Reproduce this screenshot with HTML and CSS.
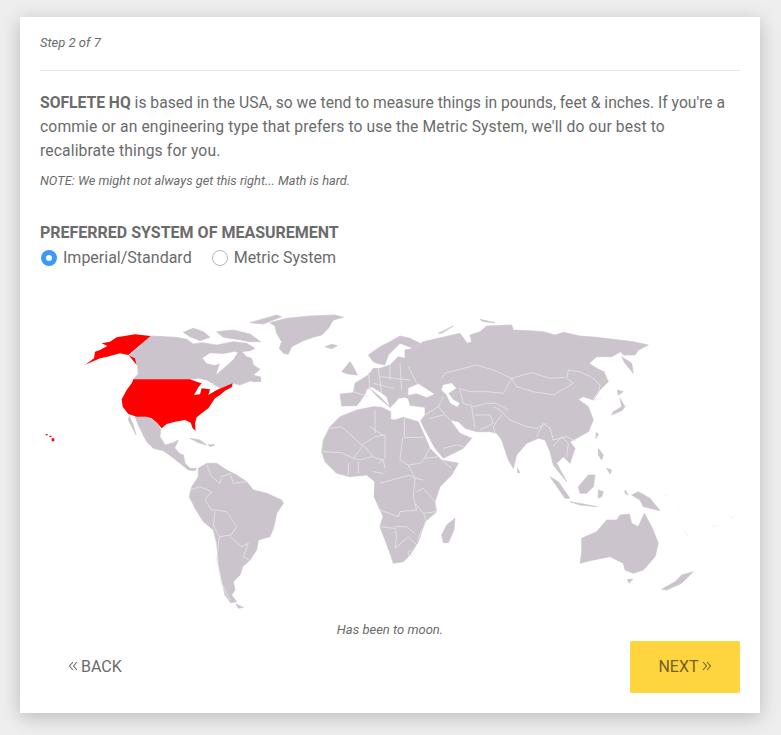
FILE: index.html
```html
<!DOCTYPE html>
<html lang="en">
<head>
<meta charset="utf-8">
<title>Step 2 of 7</title>
<link rel="stylesheet" href="styles.css">
</head>
<body>
<main class="card">
  <p class="step">Step 2 of 7</p>
  <hr class="rule">
  <p class="intro"><strong>SOFLETE HQ</strong> is based in the USA, so we tend to measure things in pounds, feet &amp; inches. If you're a <span class="loose">commie or an engineering type that prefers to use the Metric System, we'll do our best to recalibrate things for you.</span></p>
  <p class="note">NOTE: We might not always get this right... Math is hard.</p>
  <h2 class="label">PREFERRED SYSTEM OF MEASUREMENT</h2>
  <div class="radios">
    <span class="radio"><i class="dot on"></i>Imperial/Standard</span>
    <span class="radio"><i class="dot"></i>Metric System</span>
  </div>
  <svg class="map" viewBox="0 0 2220 960" aria-label="World map">
    <g class="land">
      <path d="M392,108L470,112 500,118 520,132 545,128 590,135 640,125 680,130 705,145 690,152 665,155 680,170 695,175 700,195 720,208 700,225 722,232 722,245 690,243 660,255 640,250 610,270 585,255 560,240 535,235 510,238 340,238 355,222 352,195 345,175 330,165Z"/>
      <path d="M490,97L520,85 550,95 570,112 540,122 510,110Z"/>
      <path d="M590,95L640,90 690,102 722,125 690,125 650,118 610,112Z"/>
      <path d="M690,68L770,45 785,50 730,72Z"/>
      <path d="M695,240L720,230 722,243 702,245Z"/>
      <path d="M750,68L800,55 870,48 945,45 970,52 940,60 925,85 905,105 880,112 850,122 815,140 805,163 790,160 778,145 785,125 770,100 765,78Z"/>
      <path d="M915,140L935,133 952,137 935,146Z"/>
      <path d="M965,215L990,185 1000,200 1012,225 985,222Z"/>
      <path d="M345,350L378,352 395,358 412,372 422,388 420,410 435,435 460,428 475,420 462,448 465,445 478,460 490,465 495,490 510,505 530,505 525,512 505,510 480,490 455,470 430,452 400,445 380,425 365,395 355,375Z"/>
      <path d="M328,348L340,375 348,405 338,385 325,360Z"/>
      <path d="M510,415L540,420 560,435 535,428Z"/>
      <path d="M565,433L585,435 570,440Z"/>
      <path d="M535,505L560,490 590,490 620,510 650,525 680,545 700,570 740,580 785,600 790,610 770,640 762,680 750,710 715,720 710,750 690,780 668,800 660,825 640,845 645,870 635,885 650,905 632,908 615,885 605,840 595,790 590,730 580,690 550,665 525,625 508,590 515,560 535,530Z"/>
      <path d="M648,912L670,922 655,925Z"/>
      <path d="M1112,335L1085,322 1060,320 1010,330 960,350 930,380 910,420 905,455 915,485 950,520 990,530 1040,525 1065,545 1063,590 1090,650 1080,680 1100,720 1112,720Z"/>
    </g>
    <g class="land" transform="translate(1080 0)">
      <path d="M-34,328L-18,322 0,340 30,358 45,360 70,352 115,365 150,445 185,480 235,490 215,525 180,560 165,605 170,635 135,665 115,725 90,765 70,785 40,790 30,760 0,680 10,650 -17,590 -15,545 -34,525Z"/>
      <path d="M100,145L130,125 175,115 240,100 262,130 275,125 270,105 300,95 320,78 395,75 400,90 450,92 490,95 525,105 550,97 600,108 650,112 700,118 760,125 805,135 775,150 765,165 730,165 722,155 695,170 650,170 628,190 650,205 672,215 685,245 660,270 640,300 610,290 595,298 625,320 640,360 625,395 590,415 570,425 585,445 570,490 550,470 530,490 560,545 520,495 510,455 495,420 475,415 440,430 410,465 400,505 385,480 365,420 350,400 330,395 290,395 255,385 235,365 210,360 240,400 275,415 250,445 190,475 165,445 130,380 122,362 135,345 135,322 90,316 85,296 75,292 55,295 45,308 30,322 20,290 0,275 -25,260 -40,268 -45,282 -60,305 -70,317 -115,318 -120,282 -80,278 -75,250 -35,225 -20,205 0,205 30,195 55,170 75,175 75,150Z"/>
      <path d="M-35,165L0,140 30,125 60,108 90,115 120,130 100,145 60,130 45,145 25,165 15,195 -10,190 -20,185Z"/>
      <path d="M-28,268L0,290 30,322 18,312 -8,290Z"/>
      <path d="M175,100L220,78 185,100Z"/>
      <path d="M300,58L345,68 310,65Z"/>
      <path d="M725,170L755,190 760,220 735,190Z"/>
      <path d="M712,270L730,275 715,285Z"/>
      <path d="M700,335L725,320 720,295 735,320 725,332 695,345Z"/>
      <path d="M648,398L655,402 648,415Z"/>
      <path d="M655,445L670,465 665,480 655,465Z"/>
      <path d="M680,505L695,510 690,522Z"/>
      <path d="M412,505L420,518 413,518Z"/>
      <path d="M510,530L535,545 570,595 555,595Z"/>
      <path d="M570,605L610,612 650,620 600,615Z"/>
      <path d="M595,560L625,525 645,525 640,560 620,580 600,580Z"/>
      <path d="M655,570L670,575 665,590 655,595Z"/>
      <path d="M735,570L745,585 735,580Z"/>
      <path d="M755,585L775,575 810,595 840,632 790,620 780,600Z"/>
      <path d="M225,655L222,690 205,728 190,728 185,705 200,675Z"/>
      <path d="M605,715L650,695 680,660 710,660 720,645 748,642 755,670 775,680 793,640 815,680 835,730 825,770 790,810 760,820 735,810 730,790 690,770 640,780 600,790 605,760Z"/>
      <path d="M742,838L758,838 748,850Z"/>
      <path d="M845,868L885,845 905,825 940,815 905,850 860,870Z"/>
    </g>
    <g class="sea">
      <path d="M548,175L570,160 610,162 645,155 652,158 640,178 610,205 590,222 600,190 585,195 560,190Z"/>
      <path d="M520,240L545,242 552,258 570,262 580,248 565,272 548,262 530,252Z"/>
    </g>
    <g class="sea" transform="translate(1080 0)">
      <path d="M85,265L115,252 140,268 162,282 140,292 110,280 85,285Z"/>
      <path d="M190,255L215,250 228,265 205,280 220,300 238,310 232,320 212,310 200,285 185,270Z"/>
      <path d="M15,195L30,165 50,150 72,150 55,165 30,190Z"/>
    </g>
    <g class="borders">
      <path d="M560,495L575,530 600,550 605,530 630,520 640,550 680,545M510,570L540,560 575,575 555,600 575,630 590,630 620,635 650,680 630,710 665,740 685,730 670,770 695,785M585,635L580,675 598,710 630,705M598,710L590,780 605,850 630,900"/>
      <path d="M930,385L965,380 1025,435 1065,410 1095,405M905,455L965,458 1000,475 1030,435M1000,475L1020,480 1055,470 1090,480 1095,505M985,490L985,525M1015,485L1015,520M1060,515L1090,520M1030,435L1060,470M1065,330L1065,400"/>
      <path d="M1000,275L1045,290M1045,215L1050,270M1075,205L1085,280"/>
    </g>
    <g class="borders" transform="translate(1080 0)">
      <path d="M185,235L195,220 250,205 290,195 340,210 395,235 410,260 460,275 520,285 580,250 560,235 565,210 600,215 640,235 660,255 655,275 640,295M395,235L455,218 510,235 555,232M235,265L270,275 320,275 370,280 395,235M240,270L250,310 285,320 320,310 350,310 385,330M275,320L285,385M285,345L330,345 340,370 300,390M340,320L360,330 390,360 440,380 470,385 500,370M345,400L340,380 365,345M470,410L490,370 510,385 520,420 560,410 590,425M520,440L545,410 565,430 560,470M640,300L665,295"/>
      <path d="M135,345L175,320 210,360M150,355L190,345M190,445L230,435 250,440M175,320L190,290"/>
      <path d="M73,355L73,412 130,412M68,412L60,480 85,495 120,490 130,480 150,445M135,475L175,470 215,505M85,495L105,535 130,540M0,550L35,540 90,525 105,535 100,590 110,630 60,635 55,650 0,630M110,575L130,565 165,605 170,635 130,640 105,610M130,640L140,665 120,700 112,725M0,680L45,685 50,710 45,745 85,710 110,735M45,680L80,680 105,700M15,410L15,475 -5,490M15,410L-30,380"/>
      <path d="M30,195L30,240M60,190L65,270M0,230L90,240M-20,250L40,265M85,200L110,250"/>
      <circle cx="92" cy="760" r="8"/>
    </g>
    <g class="faint" transform="translate(1080 0)">
      <path d="M850,590l8,-5M895,625l8,8M910,690l14,18M995,680l10,-4M1050,655l14,-6"/>
    </g>
    <g class="usa">
      <path d="M392,108L345,103 290,112 270,125 245,130 262,138 240,150 225,155 222,175 196,194 240,175 262,170 300,160 325,165 345,175 350,195 338,180 325,165Z"/>
      <path d="M340,238L510,238 530,245 545,250 535,262 522,285 540,283 545,265 570,268 565,285 590,270 610,262 638,250 635,262 615,272 600,285 585,295 575,310 565,325 545,340 530,352 525,370 527,392 518,385 512,368 495,360 465,365 440,372 425,385 412,370 395,355 378,350 350,350 325,342 308,320 305,298 320,270 335,250Z"/>
      <path d="M77,402h6v4h-6zM88,407h6v4h-6zM95,415h8v9h-8z"/>
    </g>
  </svg>
  <p class="caption">Has been to moon.</p>
  <div class="actions">
    <a class="btn back"><svg class="chev" viewBox="0 0 9 10"><path d="M4.500 1L1 5l3.500 4M8.500 1L5 5l3.500 4"/></svg>BACK</a>
    <a class="btn next">NEXT<svg class="chev" viewBox="0 0 9 10"><path d="M.5 1L4 5 .5 9M4.500 1L8 5 4.500 9"/></svg></a>
  </div>
</main>
</body>
</html>
```
FILE: styles.css
```css
* { box-sizing: border-box; }
html, body { margin: 0; }
body {
  background: #eeeeee;
  padding: 17px 21px 22px 20px;
  font-family: Roboto, "Liberation Sans", sans-serif;
  color: #6b6b6b;
}
.card {
  width: 740px;
  height: 696px;
  background: #ffffff;
  padding: 0 20px;
  box-shadow: 0 4px 18px rgba(0, 0, 0, 0.22);
  display: flex;
  flex-direction: column;
}
.step {
  margin: 19px 0 0;
  font-size: 13px;
  line-height: 14px;
  font-style: italic;
}
.rule {
  width: 100%;
  margin: 20px 0 0;
  border: 0;
  border-top: 1px solid #e6e6e6;
}
.intro {
  max-width: 690px;
  margin: 20px 0 0;
  font-size: 15.66px;
  line-height: 24px;
}
.loose { letter-spacing: 0.13px; }
.note {
  margin: 10px 0 0;
  font-size: 12.8px;
  line-height: 16px;
  font-style: italic;
}
.label {
  margin: 35px 0 0;
  font-size: 16px;
  line-height: 18px;
  font-weight: 700;
}
.radios {
  display: flex;
  gap: 19px;
  margin-top: 6px;
  font-size: 16px;
  line-height: 20px;
}
.radio { display: flex; align-items: center; gap: 6px; }
.dot {
  width: 16px;
  height: 16px;
  margin-left: 1px;
  border-radius: 50%;
  border: 1px solid #b5b5b5;
  background: #ffffff;
}
.dot.on { border: 5px solid #3b99fc; }
.map {
  display: block;
  width: 740px;
  height: 320px;
  margin: 32px 0 0 -20px;
  flex: none;
}
.land path { fill: #cbc4cd; stroke: #cbc4cd; stroke-width: 2; stroke-linejoin: round; }
.sea path { fill: #ffffff; stroke: #ffffff; stroke-width: 1; stroke-linejoin: round; }
.borders path, .borders circle { fill: none; stroke: #e9e6ea; stroke-width: 2.4; }
.faint path { fill: none; stroke: #f4f3f5; stroke-width: 3; }
.usa path { fill: #ff0000; }
.caption {
  margin: 2px 0 0;
  text-align: center;
  font-size: 13px;
  line-height: 16px;
  font-style: italic;
}
.actions {
  display: flex;
  justify-content: space-between;
  align-items: center;
  margin-top: 3px;
  font-size: 16px;
}
.btn { display: flex; align-items: center; gap: 3px; padding-bottom: 2px; }
.chev { width: 10px; height: 10px; }
.chev path { fill: none; stroke: currentColor; stroke-width: 1.1; }
.back { margin-left: 28px; }
.next {
  justify-content: center;
  width: 110px;
  height: 52px;
  background: #ffd53f;
  border-radius: 2px;
  color: #75601f;
}
```
